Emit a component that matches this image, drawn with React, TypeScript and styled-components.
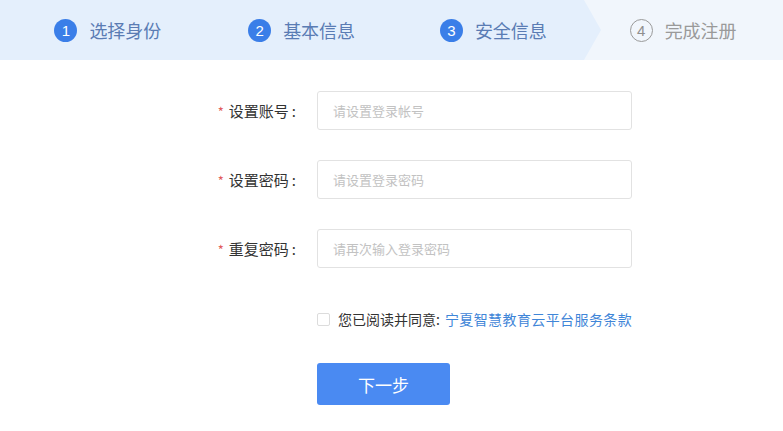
import * as React from "react";
import styled, { createGlobalStyle } from "styled-components";

const GlobalStyle = createGlobalStyle`
    html, body {
        margin: 0;
        padding: 0;
        background: #ffffff;
        font-family: "Noto Sans CJK SC", "Noto Sans", sans-serif;
    }
    * {
        box-sizing: border-box;
    }
`;

const steps = [
    { num: 1, label: "选择身份", done: true, shift: 10 },
    { num: 2, label: "基本信息", done: true, shift: 8 },
    { num: 3, label: "安全信息", done: true, shift: 4 },
    { num: 4, label: "完成注册", done: false, shift: -2 },
];

const StepBar = styled.div`
    position: relative;
    display: flex;
    height: 60px;
    background: #f1f6fc;
`;

// highlighted part of the bar, ends in an arrow after step 3
const ActiveTrack = styled.div`
    position: absolute;
    left: 0;
    top: 0;
    bottom: 0;
    width: 601px;
    background: #e4effc;
    clip-path: polygon(0 0, 584px 0, 601px 30px, 584px 60px, 0 60px);
`;

const Step = styled.div<{ shift: number }>`
    position: relative;
    flex: 1;
    display: flex;
    align-items: center;
    justify-content: center;
    gap: 12px;
    transform: translateX(${p => p.shift}px);
`;

const StepNum = styled.span<{ active: boolean }>`
    width: 23px;
    height: 23px;
    border-radius: 50%;
    display: flex;
    align-items: center;
    justify-content: center;
    font-size: 15px;
    font-family: "Liberation Sans", Arial, sans-serif;
    background: ${p => (p.active ? "#3a7ee8" : "transparent")};
    color: ${p => (p.active ? "#ffffff" : "#8f8f8f")};
    border: ${p => (p.active ? "none" : "1px solid #9a9a9a")};
`;

const StepLabel = styled.span<{ active: boolean }>`
    font-size: 18px;
    color: ${p => (p.active ? "#5a7cb4" : "#9a9a9a")};
`;

const Form = styled.div`
    display: grid;
    grid-template-columns: 100px 315px;
    column-gap: 17px;
    row-gap: 30px;
    padding-left: 200px;
    margin-top: 31px;
    align-items: center;
`;

const Label = styled.label`
    text-align: right;
    padding-right: 4px;
    font-size: 15px;
    color: #333333;
    white-space: nowrap;
`;

const Star = styled.span`
    color: #e25c5c;
    margin-right: 5px;
    font-size: 13px;
`;

const Colon = styled.span`
    margin-left: 3px;
`;

const Input = styled.input`
    height: 39px;
    width: 315px;
    border: 1px solid #e2e2e2;
    border-radius: 3px;
    padding: 0 15px;
    font-size: 13px;
    font-family: "Noto Sans CJK SC", sans-serif;
    outline: none;
    &::placeholder {
        color: #c2c2c2;
    }
`;

const Agree = styled.div`
    display: flex;
    align-items: center;
    margin: 41px 0 0 317px;
    font-size: 14px;
    color: #333333;
`;

const Box = styled.span`
    width: 13px;
    height: 13px;
    border: 1px solid #dcdcdc;
    border-radius: 2px;
    margin-right: 8px;
`;

const Link = styled.a`
    color: #3f86d8;
    margin-left: 5px;
    letter-spacing: 0.4px;
    text-decoration: none;
`;

const NextButton = styled.button`
    display: block;
    margin: 34px 0 0 317px;
    width: 133px;
    height: 42px;
    border: none;
    border-radius: 3px;
    background: #4a8af2;
    color: #ffffff;
    font-size: 17px;
    font-family: "Noto Sans CJK SC", sans-serif;
`;

const fields = [
    { label: "设置账号", placeholder: "请设置登录帐号", type: "text" },
    { label: "设置密码", placeholder: "请设置登录密码", type: "password" },
    { label: "重复密码", placeholder: "请再次输入登录密码", type: "password" },
];

export default function App() {
    return <>
        <GlobalStyle />
        <StepBar>
            <ActiveTrack />
            {steps.map(s => (
                <Step key={s.num} shift={s.shift}>
                    <StepNum active={s.done}>{s.num}</StepNum>
                    <StepLabel active={s.done}>{s.label}</StepLabel>
                </Step>
            ))}
        </StepBar>
        <Form>
            {fields.map(f => (
                <React.Fragment key={f.label}>
                    <Label><Star>*</Star>{f.label}<Colon>:</Colon></Label>
                    <Input type={f.type} placeholder={f.placeholder} />
                </React.Fragment>
            ))}
        </Form>
        <Agree>
            <Box />
            您已阅读并同意:
            <Link href="#">宁夏智慧教育云平台服务条款</Link>
        </Agree>
        <NextButton>下一步</NextButton>
    </>;
}
